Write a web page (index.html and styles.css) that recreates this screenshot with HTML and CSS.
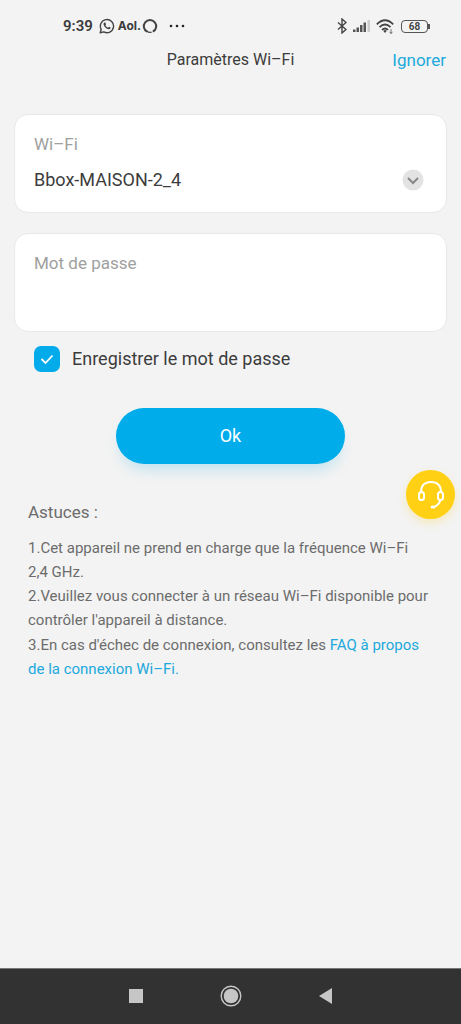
FILE: index.html
```html
<!DOCTYPE html>
<html lang="fr">
<head>
<meta charset="utf-8">
<meta name="viewport" content="width=device-width, initial-scale=1">
<title>Paramètres Wi–Fi</title>
<link rel="stylesheet" href="styles.css">
</head>
<body>
<div class="statusbar">
  <div class="status-left">
    <span class="clock">9:39</span>
    <svg class="icon-whatsapp" width="16" height="16" viewBox="0 0 16 16" fill="none" stroke="#444" stroke-width="1.4">
      <path d="M1.2 14.8l1-3.5A6.6 6.6 0 1 1 4.800 13.900z" stroke-linejoin="round"/>
      <path d="M5.300 4.500l1 0 .8 1.800-.7.9c.6 1.200 1.400 1.900 2.600 2.500l.9-.9 1.700.8c0 1-.8 1.700-1.800 1.600C7.200 10.900 4.900 8.400 4.500 6.200c0-.7.300-1.300.8-1.700z" fill="#444" stroke="none"/>
    </svg>
    <span class="aol">Aol.</span>
    <svg class="icon-ring" width="16" height="16" viewBox="0 0 16 16" fill="none" stroke="#444" stroke-width="2">
      <path d="M5.200 13.700A6.200 6.200 0 1 1 10.800 13.700"/><path d="M4.800 13.200Q7 14.800 9.500 14.200" stroke-width="1.400"/>
    </svg>
    <svg class="icon-more" width="16" height="4" viewBox="0 0 16 4" fill="#222"><circle cx="2" cy="2" r="1.300"/><circle cx="8" cy="2" r="1.300"/><circle cx="14" cy="2" r="1.300"/></svg>
  </div>
  <div class="status-right">
    <svg width="10" height="16" viewBox="0 0 10 16" fill="none" stroke="#444" stroke-width="1.400"><path d="M1 4.500l8 7-4 3.500V1l4 3.500-8 7"/></svg>
    <svg width="17" height="14" viewBox="0 0 17 14" fill="#555"><path d="M0 10.500h2.500V13H0zM3.500 8.500H6V13H3.500zM7 6h2.500v7H7zM10.500 3.500H13V13h-2.500z"/><path d="M14.500 1H17v12h-2.500z" fill="#ccc"/></svg>
    <svg width="18" height="15" viewBox="0 0 18 15" fill="none" stroke="#444" stroke-width="1.800"><path d="M.8 5.300Q9-2.800 17.200 5.300M3.500 8.200Q9 2.800 14.500 8.200M6 10.900Q9 8 12 10.900"/><path d="M7.200 11.800Q9 10.400 10.800 11.800L9 14z" fill="#444" stroke="none"/><path d="M15 10v4.500M13.500 12.800l1.500 1.700 1.500-1.700" stroke-width=".7"/></svg>
    <span class="battery">68</span>
  </div>
</div>

<header class="titlebar">
  <h1 class="title">Paramètres Wi–Fi</h1>
  <button class="skip" type="button">Ignorer</button>
</header>

<main class="content">
  <form class="form">
    <div class="card">
      <label class="field-label" for="network">Wi–Fi</label>
      <div class="select-row">
        <select class="network" id="network"><option>Bbox-MAISON-2_4</option></select>
        <svg class="chevron" width="22" height="22" viewBox="0 0 22 22" fill="none"><circle cx="11" cy="11" r="10.500" fill="#e3e3e3"/><path d="M6 9l5 5 5-5" stroke="#888" stroke-width="2"/></svg>
      </div>
    </div>
    <div class="card">
      <label class="field-label" for="password">Mot de passe</label>
      <input class="password" id="password" type="password">
    </div>
    <div class="remember">
      <input class="checkbox" id="remember" type="checkbox" checked>
      <svg class="tick" width="26" height="26" viewBox="0 0 26 26" fill="none" stroke="#fff" stroke-width="1.800"><path d="M7.500 13l4 4 7-7.500"/></svg>
      <label class="remember-label" for="remember">Enregistrer le mot de passe</label>
    </div>
    <button class="submit" type="button">Ok</button>
  </form>

  <section class="tips">
    <h2 class="tips-title">Astuces :</h2>
    <p class="tip">1.Cet appareil ne prend en charge que la fréquence Wi–Fi 2,4&nbsp;GHz.</p>
    <p class="tip">2.Veuillez vous connecter à un réseau Wi–Fi disponible pour contrôler l'appareil à distance.</p>
    <p class="tip tip-faq">3.En cas d'échec de connexion, consultez les <a class="link" href="#faq">FAQ à propos de la connexion Wi–Fi.</a></p>
  </section>
</main>

<button class="support" type="button" aria-label="Assistance">
  <svg width="28" height="30" viewBox="0 0 28 30" fill="none" stroke="#fff" stroke-width="2"><path d="M4 12C4 5.500 8 2 14 2s10 3.500 10 10"/><rect x="2" y="12" width="5" height="8" rx="2.500"/><rect x="21" y="12" width="5" height="8" rx="2.500"/><path d="M23.500 20Q22 25 17 27"/><ellipse cx="16" cy="27" rx="2.500" ry="1.600" fill="#fff" stroke="none"/></svg>
</button>

<nav class="navbar">
  <button class="nav-button" type="button" aria-label="Applications récentes"><svg width="22" height="22" viewBox="0 0 22 22"><path d="M4 4h14v14H4z" fill="#c6c6c6"/></svg></button>
  <button class="nav-button" type="button" aria-label="Accueil"><svg width="22" height="22" viewBox="0 0 22 22"><circle cx="11" cy="11" r="9.800" fill="none" stroke="#c6c6c6" stroke-width="1.400"/><circle cx="11" cy="11" r="7.300" fill="#c6c6c6"/></svg></button>
  <button class="nav-button" type="button" aria-label="Retour"><svg width="22" height="22" viewBox="0 0 22 22"><path d="M17 3v16L4 11z" fill="#c6c6c6"/></svg></button>
</nav>
</body>
</html>
```

FILE: styles.css
```css
* {
  box-sizing: border-box;
}

body {
  margin: 0;
  min-height: 100vh;
  display: flex;
  flex-direction: column;
  background: #f3f3f3;
  color: #3c3c3c;
  font-family: Roboto, "Liberation Sans", sans-serif;
  font-size: 16px;
  line-height: 24px;
}

button,
input,
select {
  margin: 0;
  padding: 0;
  border: 0;
  background: none;
  color: inherit;
  font: inherit;
}

button {
  cursor: pointer;
}

svg {
  display: block;
  flex: none;
}

.statusbar {
  display: flex;
  justify-content: space-between;
  align-items: center;
  padding: 14px 32px 0 63px;
}

.status-left {
  display: flex;
  align-items: center;
}

.clock {
  margin-right: 6px;
  font-size: 15px;
  font-weight: 600;
}

.aol {
  margin: 0 1px 0 3px;
  font-family: Inter, Roboto, sans-serif;
  font-size: 12px;
  font-weight: 700;
}

.icon-more {
  margin-left: 11px;
}

.status-right {
  display: flex;
  align-items: center;
  gap: 6px;
}

.battery {
  position: relative;
  width: 27px;
  margin: 0 1px;
  border: 1px solid #555;
  border-radius: 4px;
  font-size: 10px;
  font-weight: 600;
  line-height: 11px;
  text-align: center;
}

.battery::after {
  content: "";
  position: absolute;
  top: 3px;
  right: -3px;
  width: 2px;
  height: 5px;
  background: #555;
}

.titlebar {
  display: grid;
  grid-template-columns: 1fr auto 1fr;
  align-items: center;
  padding: 10px 15px;
}

.title {
  grid-column: 2;
  margin: 0;
  font-size: 16px;
  font-weight: 400;
}

.skip {
  justify-self: end;
  color: #21a9dc;
  font-size: 17px;
}

.content {
  flex: 1;
  padding: 32px 14px;
}

.form {
  display: flex;
  flex-direction: column;
}

.card {
  display: flex;
  flex-direction: column;
  gap: 12px;
  min-height: 99px;
  margin-bottom: 20px;
  padding: 17px 22px 16px 19px;
  border: 1px solid #e8e8e8;
  border-radius: 14px;
  background: #fff;
}

.field-label {
  color: #a0a0a0;
  font-size: 17px;
}

.select-row {
  display: grid;
  align-items: center;
}

.network {
  grid-area: 1 / 1;
  width: 100%;
  appearance: none;
  font-size: 18px;
}

.chevron {
  grid-area: 1 / 1;
  justify-self: end;
  pointer-events: none;
}

.password {
  width: 100%;
  outline: none;
  font-size: 18px;
}

.remember {
  display: grid;
  grid-template-columns: 26px 1fr;
  column-gap: 12px;
  align-items: center;
  margin: -6px 0 36px 20px;
}

.checkbox {
  grid-area: 1 / 1;
  width: 26px;
  height: 26px;
  appearance: none;
  border-radius: 7px;
  background: #04abea;
}

.tick {
  grid-area: 1 / 1;
  pointer-events: none;
}

.remember-label {
  font-size: 18px;
}

.submit {
  align-self: center;
  width: 53%;
  padding: 16px;
  border-radius: 28px;
  background: #00acea;
  box-shadow: 0 10px 16px -6px #00acea40;
  color: #fff;
  font-size: 18px;
}

.tips {
  padding: 36px 14px 0;
  color: #6c6c6c;
  font-size: 15px;
}

.tips-title {
  margin: 0 0 12px;
  font-size: 17px;
  font-weight: 400;
}

.tip {
  margin: 0;
}

.tip-faq {
  margin-top: 1px;
}

.link {
  color: #21a9dc;
  text-decoration: none;
}

.support {
  position: fixed;
  top: 470px;
  right: 6px;
  display: grid;
  place-items: center;
  width: 49px;
  height: 49px;
  border-radius: 50%;
  background: #ffd014;
  box-shadow: 0 4px 8px #ffd01440;
}

.navbar {
  display: flex;
  justify-content: center;
  gap: 47px;
  padding: 3px 0 4px;
  border-top: 1px solid #777;
  background: #323232;
}

.nav-button {
  display: grid;
  place-items: center;
  width: 48px;
  height: 48px;
}
```
